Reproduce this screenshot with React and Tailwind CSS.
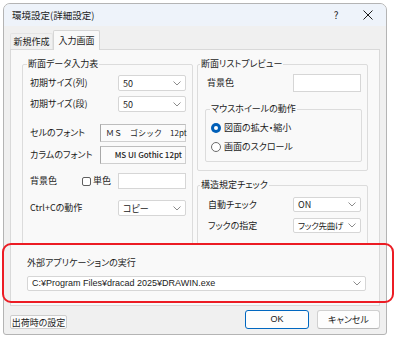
import React from "react";

// small chevron used by the combo boxes
const Chevron = () => (
  <svg width="8" height="5" viewBox="0 0 8 5" fill="none" className="shrink-0">
    <path d="M0.5 0.5L4 4L7.5 0.5" stroke="#8c8c8c" strokeWidth="1" />
  </svg>
);

const CloseIcon = () => (
  <svg width="10" height="10" viewBox="0 0 10 10" fill="none">
    <path d="M0.5 0.5L9.5 9.5M9.5 0.5L0.5 9.5" stroke="#1b1b1b" strokeWidth="1" />
  </svg>
);

const Combo = ({ text, className, textClass = "" }) => (
  <div className={`flex items-center justify-between bg-white border border-[#d6d6d6] rounded-[2px] pl-[4px] pr-[4px] ${className}`}>
    <span className={`leading-none whitespace-nowrap ${textClass}`}>{text}</span>
    <Chevron />
  </div>
);

const Group = ({ title, className, legendClass = "ml-[4px]", children }) => (
  <fieldset className={`border border-[#dcdcdc] rounded-[2px] p-0 m-0 ${className}`}>
    <legend className={`px-[1px] leading-[12px] ${legendClass}`}>{title}</legend>
    {children}
  </fieldset>
);

export default function App() {
  return (
    <div className="relative w-[400px] h-[340px] bg-white overflow-hidden font-['Noto_Sans_CJK_JP',sans-serif] text-[9px] text-[#1b1b1b] [font-feature-settings:'palt']">
      <div className="ml-[3px] mt-[3px] w-[384px] h-[332px] border border-[#b4b4b4] rounded-t-[7px] rounded-b-[3px] bg-[#f0f0f0] flex flex-col overflow-hidden">
        {/* title bar */}
        <div className="h-[22px] shrink-0 bg-[#eef3fa] flex items-center pl-[8px] pr-[13px]">
          <span className="text-[9.5px]">環境設定(詳細設定)</span>
          <span className="ml-auto w-[10px] text-center text-[10px] leading-none">?</span>
          <span className="ml-[22px] flex items-center"><CloseIcon /></span>
        </div>

        {/* tabs */}
        <div className="h-[23px] shrink-0 flex items-end pl-[6px]">
          <div className="h-[16px] w-[43px] flex items-center justify-center border border-b-0 border-[#e4e4e4] rounded-t-[2px]">新規作成</div>
          <div className="relative z-10 -mb-px h-[20px] w-[47px] flex items-center justify-center bg-[#f9f9f9] border border-b-0 border-[#d6d6d6] rounded-t-[2px]">入力画面</div>
        </div>

        {/* tab page */}
        <div className="ml-[6px] w-[370px] h-[257px] shrink-0 border border-[#d9d9d9] bg-[#f9f9f9] flex flex-col">
          <div className="flex pt-[8px] pl-[11px]">
            {/* left group */}
            <Group title="断面データ入力表" className="w-[171px] h-[187px]">
              <div className="flex flex-col pl-[7px] pr-[6px]">
                <div className="mt-[5px] h-[16px] flex items-center justify-between">
                  <span>初期サイズ(列)</span>
                  <Combo text="50" className="w-[68px] h-[16px]" />
                </div>
                <div className="mt-[5px] h-[16px] flex items-center justify-between">
                  <span>初期サイズ(段)</span>
                  <Combo text="50" className="w-[68px] h-[16px]" />
                </div>
                <div className="mt-[12px] h-[18px] flex items-center justify-between">
                  <span>セルのフォント</span>
                  <div className="w-[86px] h-[18px] bg-[#fbfbfb] border border-[#cfcfcf] border-l-[#a8a8a8] border-t-[#bdbdbd] flex items-center pl-[5px] whitespace-nowrap text-[8px] [font-feature-settings:normal]">
                    ＭＳ　ゴシック　12pt
                  </div>
                </div>
                <div className="mt-[4px] h-[18px] flex items-center justify-between">
                  <span>カラムのフォント</span>
                  <div className="w-[86px] h-[18px] bg-[#fbfbfb] border border-[#cfcfcf] border-l-[#a8a8a8] border-t-[#bdbdbd] flex items-center justify-end pr-[3px] whitespace-nowrap text-[8px] font-medium">
                    MS UI Gothic 12pt
                  </div>
                </div>
                <div className="mt-[9px] h-[16px] flex items-center">
                  <span className="w-[52px]">背景色</span>
                  <span className="w-[9px] h-[9px] border border-[#5f5f5f] rounded-[2px] bg-white" />
                  <span className="ml-[2px]">単色</span>
                  <div className="ml-auto w-[68px] h-[16px] bg-white border border-[#d6d6d6]" />
                </div>
                <div className="mt-[11px] h-[16px] flex items-center justify-between">
                  <span>Ctrl+Cの動作</span>
                  <Combo text="コピー" className="w-[68px] h-[16px]" />
                </div>
              </div>
            </Group>

            {/* right column */}
            <div className="ml-[4px] w-[171px] flex flex-col">
              <Group title="断面リストプレビュー" className="w-[171px] h-[113px]" legendClass="ml-[2px]">
                <div className="mt-[4px] h-[18px] flex items-center justify-between pl-[9px] pr-[6px]">
                  <span>背景色</span>
                  <div className="w-[68px] h-[18px] bg-white border border-[#d6d6d6]" />
                </div>
                <Group title="マウスホイールの動作" className="mt-[11px] ml-[7px] w-[157px] h-[59px]" legendClass="ml-[4px]">
                  <div className="mt-[7px] h-[12px] flex items-center pl-[5px]">
                    <span className="w-[10px] h-[10px] rounded-full bg-[#005fb8] flex items-center justify-center">
                      <span className="w-[4px] h-[4px] rounded-full bg-white" />
                    </span>
                    <span className="ml-[3px]">図面の拡大・縮小</span>
                  </div>
                  <div className="mt-[7px] h-[12px] flex items-center pl-[5px]">
                    <span className="w-[10px] h-[10px] rounded-full border border-[#6b6b6b] bg-white" />
                    <span className="ml-[3px]">画面のスクロール</span>
                  </div>
                </Group>
              </Group>

              <Group title="構造規定チェック" className="mt-[8px] w-[171px] h-[66px]" legendClass="ml-[2px]">
                <div className="mt-[6px] h-[15px] flex items-center justify-between pl-[10px] pr-[6px]">
                  <span>自動チェック</span>
                  <Combo text="ON" className="w-[68px] h-[15px]" />
                </div>
                <div className="mt-[6px] h-[15px] flex items-center justify-between pl-[10px] pr-[6px]">
                  <span>フックの指定</span>
                  <Combo text="フック先曲げ" className="w-[68px] h-[15px]" textClass="text-[8.5px] tracking-[-0.3px]" />
                </div>
              </Group>
            </div>
          </div>

          {/* external application */}
          <div className="pl-[16px] flex flex-col">
            <span className="mt-[12px] leading-[12px]">外部アプリケーションの実行</span>
            <Combo
              text="C:¥Program Files¥dracad 2025¥DRAWIN.exe"
              className="mt-[7px] w-[339px] h-[15px] font-['Liberation_Sans',sans-serif]"
            />
          </div>
        </div>

        {/* buttons */}
        <div className="mt-[4px] flex items-end pl-[6px] pr-[6px]">
          <button className="h-[14px] w-[57px] bg-[#fbfbfb] border border-[#cdcdcd] rounded-[2px] flex items-center justify-center leading-none">
            出荷時の設定
          </button>
          <button className="ml-auto h-[19px] w-[64px] bg-[#fdfdfd] border border-[#0067c0] rounded-[3px] flex items-center justify-center leading-none font-['Liberation_Sans',sans-serif]">
            OK
          </button>
          <button className="ml-[8px] h-[19px] w-[63px] bg-[#fdfdfd] border border-[#d0d0d0] border-b-[#b8b8b8] rounded-[3px] flex items-center justify-center leading-none">
            キャンセル
          </button>
        </div>
      </div>

      {/* red annotation */}
      <div className="absolute left-[2px] top-[243px] w-[392px] h-[60px] border-2 border-[#ec1c24] rounded-[9px] pointer-events-none" />
    </div>
  );
}
